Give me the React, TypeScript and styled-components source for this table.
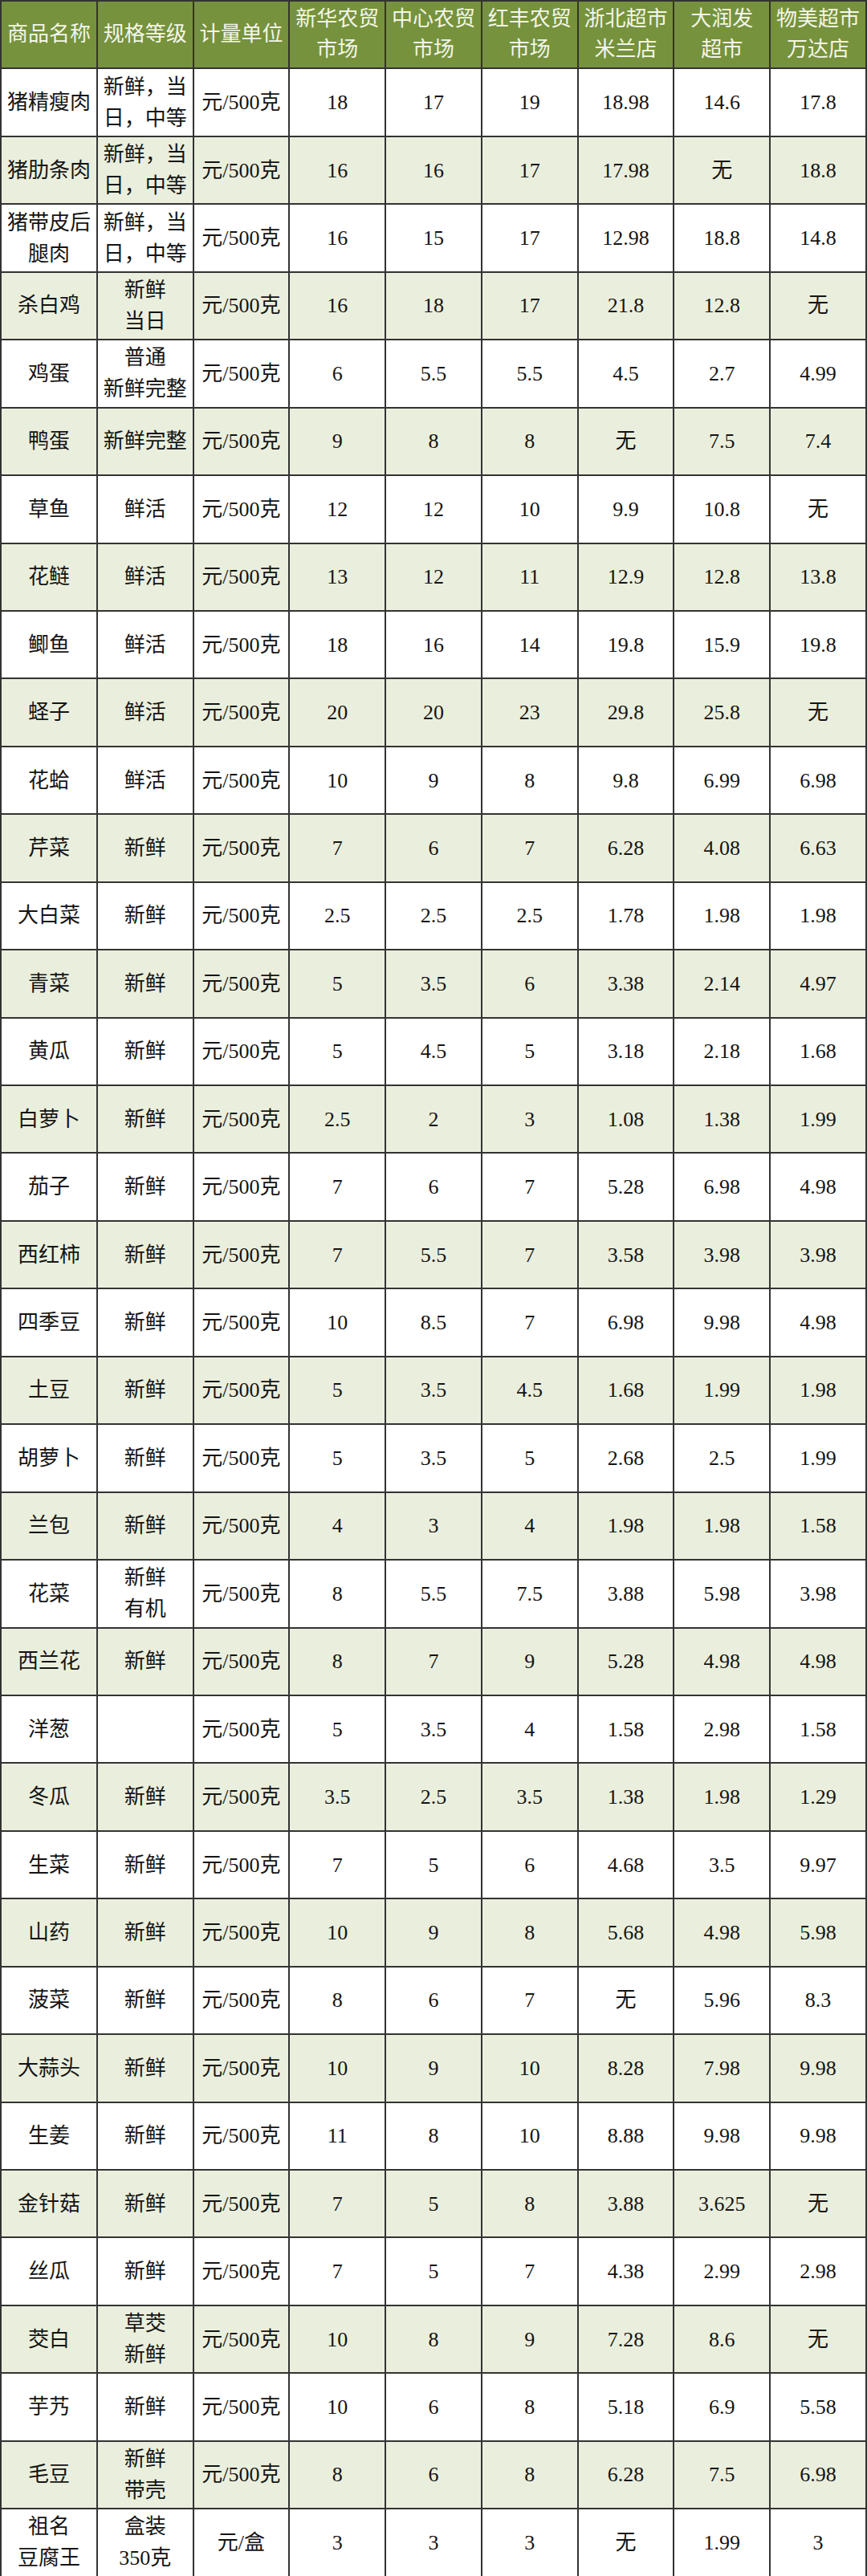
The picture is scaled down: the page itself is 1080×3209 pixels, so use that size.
import { FC } from 'react';
import styled, { createGlobalStyle } from 'styled-components';

const GlobalStyle = createGlobalStyle`
  html, body {
    margin: 0;
    padding: 0;
    background: #ffffff;
  }
`

const Sheet = styled.table`
  width: 1080px;
  height: 3209px;
  table-layout: fixed;
  border-collapse: collapse;
  font-family: "Liberation Serif", "Noto Sans CJK SC", serif;
  font-size: 26px;
  line-height: 39px;
  color: #141414;
`

const Row = styled.tr<{ $shaded?: boolean }>`
  height: 84.45px;
  background: ${(p) => (p.$shaded ? '#eaefdd' : '#ffffff')};
`

const HeadCell = styled.th`
  background: #76923c;
  color: #f3f6e9;
  font-weight: 400;
  text-align: center;
  vertical-align: middle;
  border: 2px solid #333333;
  padding: 0 4px;
  white-space: pre-line;
  line-height: 38px;
`

const Cell = styled.td`
  text-align: center;
  vertical-align: middle;
  border: 2px solid #333333;
  padding: 0 4px;
  white-space: pre-line;
  word-break: break-all;
`

const headers = [
  '商品名称',
  '规格等级',
  '计量单位',
  '新华农贸\n市场',
  '中心农贸\n市场',
  '红丰农贸\n市场',
  '浙北超市\n米兰店',
  '大润发\n超市',
  '物美超市\n万达店',
]

type Item = [string, string, string, string, string, string, string, string, string]

const G = '元/500克'
const items: Item[] = [
  ['猪精瘦肉', '新鲜，当日，中等', G, '18', '17', '19', '18.98', '14.6', '17.8'],
  ['猪肋条肉', '新鲜，当日，中等', G, '16', '16', '17', '17.98', '无', '18.8'],
  ['猪带皮后腿肉', '新鲜，当日，中等', G, '16', '15', '17', '12.98', '18.8', '14.8'],
  ['杀白鸡', '新鲜\n当日', G, '16', '18', '17', '21.8', '12.8', '无'],
  ['鸡蛋', '普通\n新鲜完整', G, '6', '5.5', '5.5', '4.5', '2.7', '4.99'],
  ['鸭蛋', '新鲜完整', G, '9', '8', '8', '无', '7.5', '7.4'],
  ['草鱼', '鲜活', G, '12', '12', '10', '9.9', '10.8', '无'],
  ['花鲢', '鲜活', G, '13', '12', '11', '12.9', '12.8', '13.8'],
  ['鲫鱼', '鲜活', G, '18', '16', '14', '19.8', '15.9', '19.8'],
  ['蛏子', '鲜活', G, '20', '20', '23', '29.8', '25.8', '无'],
  ['花蛤', '鲜活', G, '10', '9', '8', '9.8', '6.99', '6.98'],
  ['芹菜', '新鲜', G, '7', '6', '7', '6.28', '4.08', '6.63'],
  ['大白菜', '新鲜', G, '2.5', '2.5', '2.5', '1.78', '1.98', '1.98'],
  ['青菜', '新鲜', G, '5', '3.5', '6', '3.38', '2.14', '4.97'],
  ['黄瓜', '新鲜', G, '5', '4.5', '5', '3.18', '2.18', '1.68'],
  ['白萝卜', '新鲜', G, '2.5', '2', '3', '1.08', '1.38', '1.99'],
  ['茄子', '新鲜', G, '7', '6', '7', '5.28', '6.98', '4.98'],
  ['西红柿', '新鲜', G, '7', '5.5', '7', '3.58', '3.98', '3.98'],
  ['四季豆', '新鲜', G, '10', '8.5', '7', '6.98', '9.98', '4.98'],
  ['土豆', '新鲜', G, '5', '3.5', '4.5', '1.68', '1.99', '1.98'],
  ['胡萝卜', '新鲜', G, '5', '3.5', '5', '2.68', '2.5', '1.99'],
  ['兰包', '新鲜', G, '4', '3', '4', '1.98', '1.98', '1.58'],
  ['花菜', '新鲜\n有机', G, '8', '5.5', '7.5', '3.88', '5.98', '3.98'],
  ['西兰花', '新鲜', G, '8', '7', '9', '5.28', '4.98', '4.98'],
  ['洋葱', '', G, '5', '3.5', '4', '1.58', '2.98', '1.58'],
  ['冬瓜', '新鲜', G, '3.5', '2.5', '3.5', '1.38', '1.98', '1.29'],
  ['生菜', '新鲜', G, '7', '5', '6', '4.68', '3.5', '9.97'],
  ['山药', '新鲜', G, '10', '9', '8', '5.68', '4.98', '5.98'],
  ['菠菜', '新鲜', G, '8', '6', '7', '无', '5.96', '8.3'],
  ['大蒜头', '新鲜', G, '10', '9', '10', '8.28', '7.98', '9.98'],
  ['生姜', '新鲜', G, '11', '8', '10', '8.88', '9.98', '9.98'],
  ['金针菇', '新鲜', G, '7', '5', '8', '3.88', '3.625', '无'],
  ['丝瓜', '新鲜', G, '7', '5', '7', '4.38', '2.99', '2.98'],
  ['茭白', '草茭\n新鲜', G, '10', '8', '9', '7.28', '8.6', '无'],
  ['芋艿', '新鲜', G, '10', '6', '8', '5.18', '6.9', '5.58'],
  ['毛豆', '新鲜\n带壳', G, '8', '6', '8', '6.28', '7.5', '6.98'],
  ['祖名\n豆腐王', '盒装\n350克', '元/盒', '3', '3', '3', '无', '1.99', '3'],
]

const PriceTable: FC = () => {
  return (
    <Sheet>
      <thead>
        <Row>
          {headers.map((h) => (
            <HeadCell key={h}>{h}</HeadCell>
          ))}
        </Row>
      </thead>
      <tbody>
        {items.map((item, i) => (
          <Row key={item[0]} $shaded={i % 2 === 1}>
            {item.map((v, j) => (
              <Cell key={j}>{v}</Cell>
            ))}
          </Row>
        ))}
      </tbody>
    </Sheet>
  )
}

export default function App() {
  return (
    <>
      <GlobalStyle />
      <PriceTable />
    </>
  )
}
